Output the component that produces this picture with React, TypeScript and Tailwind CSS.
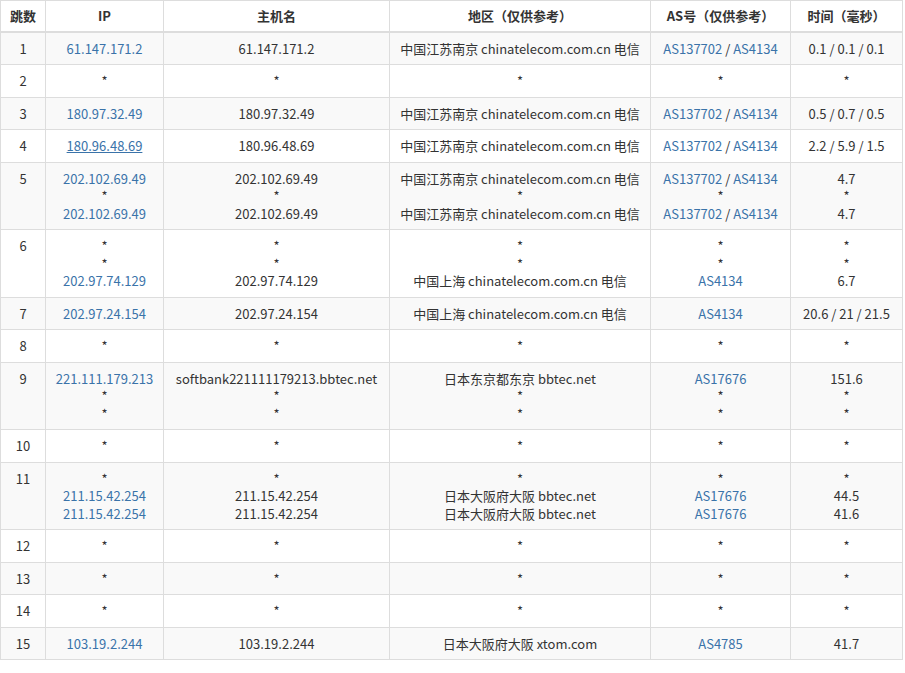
import React from "react";

type Cell = string[];
const rows: { n: number; ip: Cell; host: Cell; reg: Cell; as: Cell; t: Cell; u?: boolean }[] = [];
const tel = "中国江苏南京 chinatelecom.com.cn 电信";
const A2 = "AS137702 / AS4134";
rows.push({ n: 1, ip: ["61.147.171.2"], host: ["61.147.171.2"], reg: [tel], as: [A2], t: ["0.1 / 0.1 / 0.1"] });
rows.push({ n: 2, ip: ["*"], host: ["*"], reg: ["*"], as: ["*"], t: ["*"] });
rows.push({ n: 3, ip: ["180.97.32.49"], host: ["180.97.32.49"], reg: [tel], as: [A2], t: ["0.5 / 0.7 / 0.5"] });
rows.push({ n: 4, ip: ["180.96.48.69"], host: ["180.96.48.69"], reg: [tel], as: [A2], t: ["2.2 / 5.9 / 1.5"], u: true });
rows.push({ n: 5, ip: ["202.102.69.49", "*", "202.102.69.49"], host: ["202.102.69.49", "*", "202.102.69.49"], reg: [tel, "*", tel], as: [A2, "*", A2], t: ["4.7", "*", "4.7"] });
rows.push({ n: 6, ip: ["*", "*", "202.97.74.129"], host: ["*", "*", "202.97.74.129"], reg: ["*", "*", "中国上海 chinatelecom.com.cn 电信"], as: ["*", "*", "AS4134"], t: ["*", "*", "6.7"] });
rows.push({ n: 7, ip: ["202.97.24.154"], host: ["202.97.24.154"], reg: ["中国上海 chinatelecom.com.cn 电信"], as: ["AS4134"], t: ["20.6 / 21 / 21.5"] });
rows.push({ n: 8, ip: ["*"], host: ["*"], reg: ["*"], as: ["*"], t: ["*"] });
rows.push({ n: 9, ip: ["221.111.179.213", "*", "*"], host: ["softbank221111179213.bbtec.net", "*", "*"], reg: ["日本东京都东京 bbtec.net", "*", "*"], as: ["AS17676", "*", "*"], t: ["151.6", "*", "*"] });
rows.push({ n: 10, ip: ["*"], host: ["*"], reg: ["*"], as: ["*"], t: ["*"] });
const osk = "日本大阪府大阪 bbtec.net";
rows.push({ n: 11, ip: ["*", "211.15.42.254", "211.15.42.254"], host: ["*", "211.15.42.254", "211.15.42.254"], reg: ["*", osk, osk], as: ["*", "AS17676", "AS17676"], t: ["*", "44.5", "41.6"] });
for (const n of [12, 13, 14]) rows.push({ n, ip: ["*"], host: ["*"], reg: ["*"], as: ["*"], t: ["*"] });
rows.push({ n: 15, ip: ["103.19.2.244"], host: ["103.19.2.244"], reg: ["日本大阪府大阪 xtom.com"], as: ["AS4785"], t: ["41.7"] });

const link = "text-[#3a73a9]";

function AsLine({ s }: { s: string }) {
  if (s === "*") return <div>*</div>;
  const parts = s.split(" / ");
  return (
    <div>
      {parts.map((p, i) => (
        <React.Fragment key={i}>
          {i > 0 && " / "}
          <span className={link}>{p}</span>
        </React.Fragment>
      ))}
    </div>
  );
}

export default function App() {
  const td = "border border-[#ddd] px-2 pt-[7px] pb-[7px] align-top text-center";
  return (
    <div className="w-[905px] h-[673px] overflow-hidden bg-white text-[#333] text-[13px] leading-[17.5px]" style={{ fontFamily: '"Noto Sans CJK SC", "Noto Sans", sans-serif' }}>
      <table className="border-collapse w-[902px] table-fixed">
        <colgroup>
          <col className="w-[45px]" />
          <col className="w-[118px]" />
          <col className="w-[226px]" />
          <col className="w-[261px]" />
          <col className="w-[140px]" />
          <col className="w-[112px]" />
        </colgroup>
        <thead>
          <tr className="font-bold">
            {["跳数", "IP", "主机名", "地区（仅供参考）", "AS号（仅供参考）", "时间（毫秒）"].map((h) => (
              <th key={h} className="border border-[#ddd] border-b-2 px-1 pt-[6px] pb-[6px] text-center font-bold">{h}</th>
            ))}
          </tr>
        </thead>
        <tbody>
          {rows.map((r) => (
            <tr key={r.n} className={r.n % 2 ? "bg-[#f9f9f9]" : "bg-white"}>
              <td className={td}>{r.n}</td>
              <td className={td}>{r.ip.map((s, i) => <div key={i} className={s === "*" ? "" : link + (r.u ? " underline" : "")}>{s}</div>)}</td>
              <td className={td + " px-1 whitespace-nowrap"}>{r.host.map((s, i) => <div key={i}>{s}</div>)}</td>
              <td className={td + " px-1 whitespace-nowrap"}>{r.reg.map((s, i) => <div key={i}>{s}</div>)}</td>
              <td className={td}>{r.as.map((s, i) => <AsLine key={i} s={s} />)}</td>
              <td className={td + " px-1 whitespace-nowrap"}>{r.t.map((s, i) => <div key={i}>{s}</div>)}</td>
            </tr>
          ))}
        </tbody>
      </table>
    </div>
  );
}
